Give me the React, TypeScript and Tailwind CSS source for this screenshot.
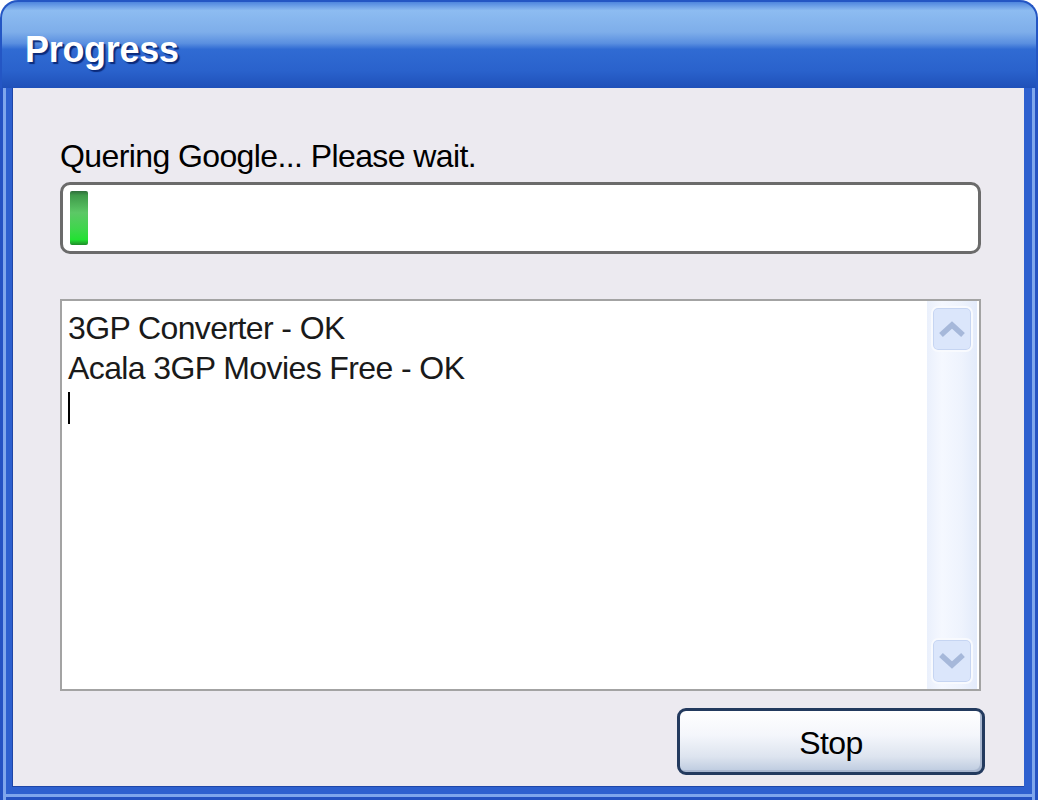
import React from "react";

function ScrollButton({ dir }: { dir: "up" | "down" }) {
  return (
    <div className="w-[42px] h-[46px] rounded-[7px] border-2 border-white/80 bg-[#dbe6fb] shadow-[inset_0_0_0_1px_#c6d5f2] flex items-center justify-center">
      <svg width="28" height="18" viewBox="0 0 28 18" fill="none">
        {dir === "up" ? (
          <path d="M3 15 L14 5 L25 15" stroke="#a6b8da" strokeWidth="5.5" strokeLinejoin="miter" />
        ) : (
          <path d="M3 3 L14 13 L25 3" stroke="#a6b8da" strokeWidth="5.5" strokeLinejoin="miter" />
        )}
      </svg>
    </div>
  );
}

export default function App() {
  return (
    <div className="w-[1038px] h-[800px] bg-white flex flex-col font-['Liberation_Sans',Arial,sans-serif] text-black">
      {/* Title bar */}
      <div className="h-[88px] shrink-0 rounded-t-[18px] border-t-2 border-x-2 border-[#2456c4] bg-[linear-gradient(180deg,#4f86de_0%,#8dbcf1_10%,#7eaeea_35%,#5a8fe0_48%,#306bd3_55%,#2a62cc_80%,#1f50b9_100%)] pl-[23px] pt-[30px]">
        <span className="text-[36px] leading-none font-bold text-white tracking-[-0.3px] [text-shadow:2px_2px_1px_#0b2a7a]">
          Progress
        </span>
      </div>

      {/* Frame + client area */}
      <div className="flex-1 flex bg-[#2d60cf] pl-[12px] pr-[14px] pb-[13px] shadow-[inset_3px_0_0_#2452c2,inset_6px_0_0_#7ea6ec,inset_-3px_0_0_#2452c2,inset_-6px_0_0_#7ea6ec,inset_0_-3px_0_#2452c2,inset_0_-6px_0_#7ea6ec]">
        <div className="flex-1 flex flex-col bg-[#eceaf0] border-l border-b border-[#1e46a8] pl-[47px] pr-[43px] pt-[48px]">
          <div className="text-[32px] leading-[40px] tracking-[-0.6px]">Quering Google... Please wait.</div>

          {/* Progress bar */}
          <div className="mt-[6px] h-[72px] rounded-[10px] border-[3px] border-[#6b6b6b] bg-white pl-[7px] py-[6px] flex">
            <div className="w-[18px] h-full rounded-[2px] bg-[linear-gradient(180deg,#2f6e3b_0%,#3f9a4a_8%,#5cc866_40%,#3fd64c_70%,#22e132_90%,#1f8a2a_100%)]" />
          </div>

          {/* Log box */}
          <div className="mt-[45px] h-[392px] border-2 border-[#a3a3a3] bg-white flex">
            <div className="flex-1 pl-[6px] pt-[7px] text-[32px] leading-[40px] tracking-[-0.6px] text-[#1a1a1a]">
              <div>3GP Converter - OK</div>
              <div>Acala 3GP Movies Free - OK</div>
              <div className="h-[40px] flex items-center">
                <div className="w-[2px] h-[32px] bg-black" />
              </div>
            </div>
            <div className="w-[50px] mr-[2px] bg-[linear-gradient(90deg,#eaf0fc_0%,#f5f8ff_30%,#eef3fd_70%,#e3ebfb_100%)] flex flex-col items-center justify-between py-[5px]">
              <ScrollButton dir="up" />
              <ScrollButton dir="down" />
            </div>
          </div>

          {/* Button row */}
          <div className="mt-[17px] flex justify-end mr-[-4px]">
            <div className="w-[308px] h-[67px] rounded-[9px] border-[3px] border-[#233a5e] bg-[linear-gradient(180deg,#ffffff_0%,#f4f6fb_40%,#dde4ef_75%,#bccadf_100%)] shadow-[inset_-2px_-2px_0_#a9b7cf] flex items-center justify-center text-[32px] leading-none tracking-[-0.6px] pt-[2px]">
              Stop
            </div>
          </div>
        </div>
      </div>
    </div>
  );
}
